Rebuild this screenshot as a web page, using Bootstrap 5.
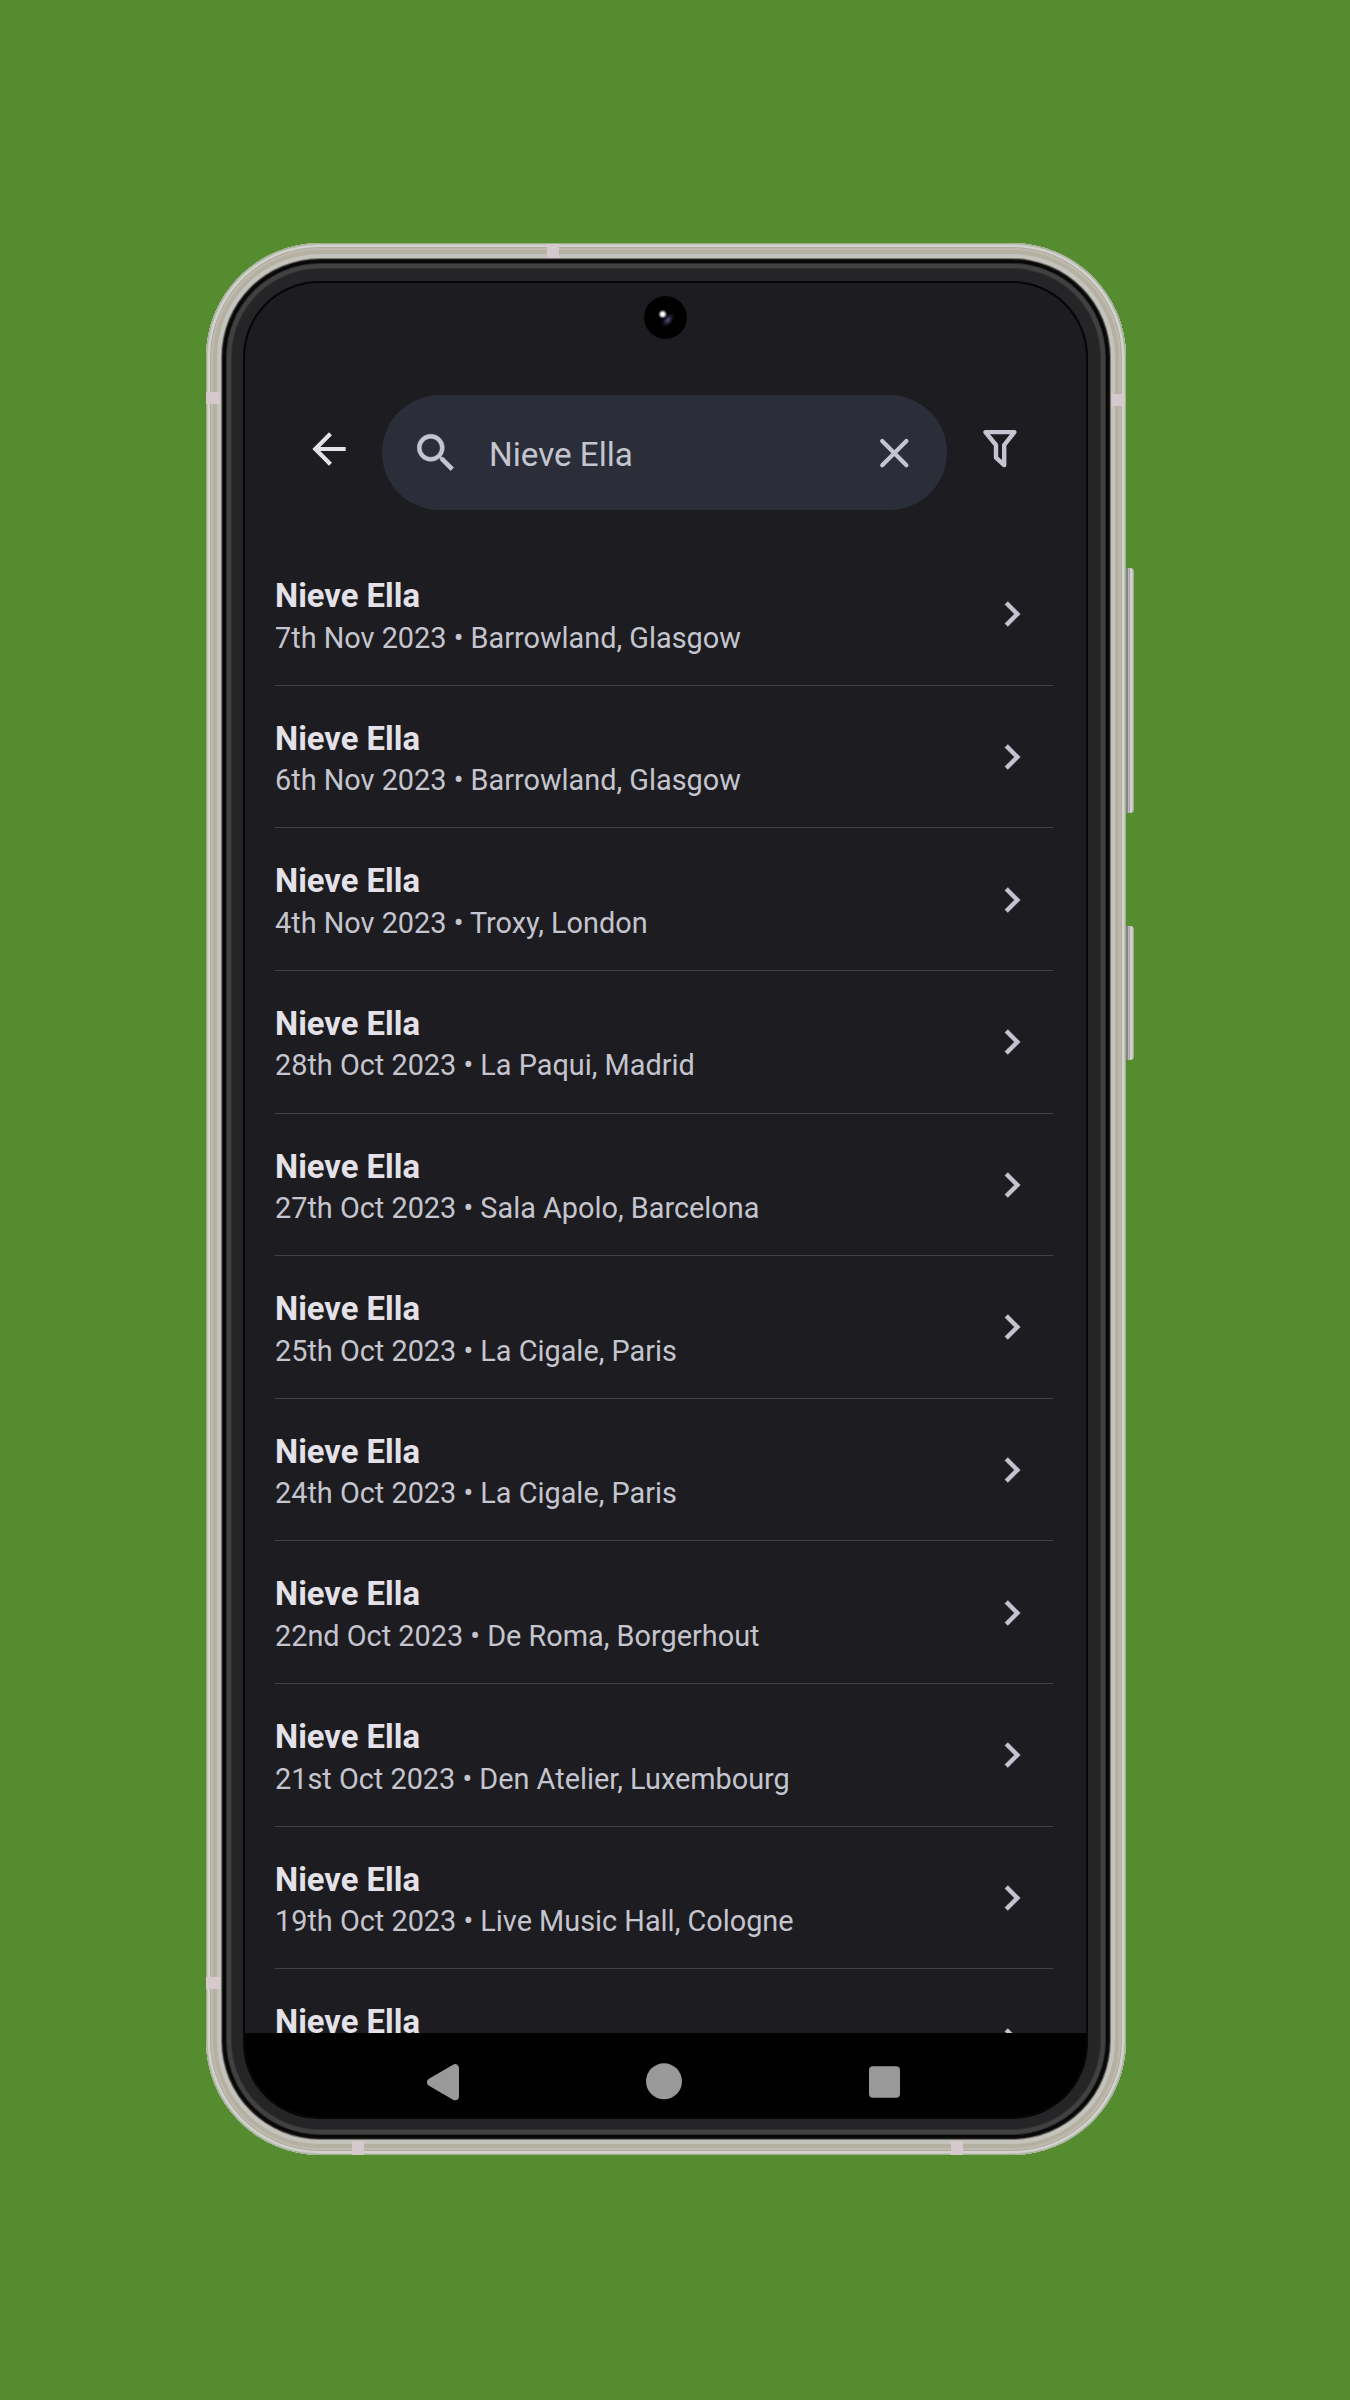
<!DOCTYPE html>
<html lang="en" data-bs-theme="dark">
<head>
<meta charset="utf-8">
<meta name="viewport" content="width=device-width, initial-scale=1">
<title>Gig search</title>
<link href="https://cdn.jsdelivr.net/npm/bootstrap@5.3.0/dist/css/bootstrap.min.css" rel="stylesheet">
<style>
body{background:#548c2f;font-family:Roboto,"Liberation Sans",sans-serif;min-height:2400px;padding:243px 0 0 206px;overflow-x:hidden}
.phone{width:920px;height:1912px;border-radius:114px;background:#252527;padding:40px 40px 38px 39px;
box-shadow:inset 0 0 0 1px #9db18c,inset 0 0 0 2px #c3c5be,inset 0 0 0 4px #d3d3cf,inset 0 0 0 5px #aeaba0,inset 0 0 0 7px #bfbaad,inset 0 0 0 11px #b5b1a2,inset 0 0 0 15px #c5c3bd,inset 0 0 0 16px #77756e,inset 0 0 0 17px #20201e,inset 0 0 0 20px #080808,inset 0 0 0 21px #2b2b2b,inset 0 0 0 25px #414141,inset 0 0 0 26px #303030}
.screen{height:1834px;border-radius:74px;background:#1d1c20;overflow:hidden;box-shadow:0 0 0 2px #060606}
/* antenna bands on the metal frame */
.band{background:#d5c9ce}
.band-side{width:14px;height:12px}
.band-edge{width:12px;height:14px}
.band-1{left:341px;top:1px}
.band-2{left:0;top:149px}
.band-3{left:905px;top:151px}
.band-4{left:0;top:1734px}
.band-5{left:146px;top:1898px}
.band-6{left:745px;top:1898px}
.side-key{left:920px;width:8px;border-radius:0 4px 4px 0;background:linear-gradient(90deg,#858585 0 1.5px,#bdbbb8 2px 3px,#a8a6a3 3.5px,#d2d1cf 4.5px 6px,#9b9b99 8px)}
.key-volume{top:325px;height:245px}
.key-power{top:683px;height:134px}
.camera{left:438px;top:53px}
.topbar{height:260px;padding:112px 0 0 59px}
.back-icon{margin-top:28.5px;color:#e4e2e8}
.search{width:565px;height:115px;margin-left:28px;padding:0 28px;background:#2b2e39;color:#c4c5d0;font-size:33.2px;line-height:40px}
.lens-icon{margin-left:.5px;stroke:currentColor;stroke-width:.2}
.query{margin:4px 0 0 28.5px}
.filter-icon{margin:31px 0 0 32px}
.tone{color:#c4c5d0}
.chevron{position:relative;margin-top:1px;stroke:currentColor;stroke-width:.2}
.rows{height:1490px;overflow:hidden;padding:0 33px 0 30px}
.row-item{height:142.63px;border-bottom:1px solid #424247;padding-right:16px}
.gig{font-size:32.8px;line-height:38px;font-weight:700;color:#e4e2e8;margin-top:4px}
.info{font-size:28.85px;line-height:34px;color:#c4c5ce;margin-top:5.4px}
.navkeys{height:84px;background:#000;padding:14px 186px 0 182px}
</style>
</head>
<body>
<main class="phone position-relative">
  <div class="side-key key-volume position-absolute"></div>
  <div class="side-key key-power position-absolute"></div>
  <i class="band band-edge band-1 position-absolute"></i>
  <i class="band band-side band-2 position-absolute"></i>
  <i class="band band-side band-3 position-absolute"></i>
  <i class="band band-side band-4 position-absolute"></i>
  <i class="band band-edge band-5 position-absolute"></i>
  <i class="band band-edge band-6 position-absolute"></i>

  <div class="screen d-flex flex-column">
    <header class="topbar d-flex align-items-start flex-shrink-0">
      <svg class="back-icon flex-shrink-0" width="50" height="50" viewBox="0 0 24 24" fill="currentColor"><path d="M20 11H7.83l5.59-5.59L12 4l-8 8 8 8 1.41-1.41L7.83 13H20z"/></svg>
      <div class="search rounded-pill d-flex align-items-center flex-shrink-0">
        <svg class="lens-icon flex-shrink-0" width="50" height="50" viewBox="0 0 24 24" fill="currentColor"><path d="M15.5 14h-.79l-.28-.27C15.41 12.59 16 11.11 16 9.5 16 5.91 13.09 3 9.5 3S3 5.91 3 9.5 5.91 16 9.5 16c1.61 0 3.09-.59 4.23-1.57l.27.28v.79l5 4.99L20.49 19l-4.99-5zm-6 0C7.01 14 5 11.99 5 9.5S7.01 5 9.5 5 14 7.01 14 9.5 11.99 14 9.5 14z"/></svg>
        <span class="query flex-grow-1">Nieve Ella</span>
        <svg class="flex-shrink-0" width="50" height="50" viewBox="0 0 50 50" fill="none" stroke="currentColor" stroke-width="4.2" stroke-linecap="round"><path d="M13.2 13 37.4 37.2M37.4 13 13.2 37.2"/></svg>
      </div>
      <svg class="filter-icon tone flex-shrink-0" width="42" height="46" viewBox="979 426 42 46" fill="none" stroke="currentColor" stroke-width="4.4" stroke-linejoin="round"><path d="M985.4 432.1H1014.4L1004.2 445V465L996 457.6V445Z"/></svg>
    </header>
    <section class="rows" id="rows"></section>
    <footer class="navkeys d-flex justify-content-between align-items-start flex-shrink-0">
      <svg width="32" height="70" viewBox="0 0 32 70"><path d="M4 35.2 28 21.2V49.2Z" fill="#999" stroke="#999" stroke-width="8" stroke-linejoin="round"/></svg>
      <svg width="37" height="70" viewBox="0 0 37 70"><circle cx="18" cy="34.3" r="18" fill="#999"/></svg>
      <svg width="31" height="70" viewBox="0 0 31 70"><rect y="19.3" width="31" height="31.4" rx="4" fill="#999"/></svg>
    </footer>
  </div>

  <svg class="camera position-absolute" width="43" height="43" viewBox="0 0 43 43">
    <defs>
      <radialGradient id="glint"><stop offset=".3" stop-color="#fff"/><stop offset="1" stop-color="#fff" stop-opacity="0"/></radialGradient>
      <radialGradient id="lens"><stop offset="0" stop-color="#5b558a"/><stop offset="1" stop-color="#2a2745" stop-opacity="0"/></radialGradient>
    </defs>
    <circle cx="21.5" cy="21.5" r="21.4" fill="#000"/>
    <ellipse cx="24" cy="24" rx="8.5" ry="5" fill="url(#lens)" transform="rotate(-50 24 24)"/>
    <circle cx="18.7" cy="18.2" r="4.6" fill="url(#glint)"/>
  </svg>
</main>
<script>
const gigs = [
  "7th Nov 2023 • Barrowland, Glasgow",
  "6th Nov 2023 • Barrowland, Glasgow",
  "4th Nov 2023 • Troxy, London",
  "28th Oct 2023 • La Paqui, Madrid",
  "27th Oct 2023 • Sala Apolo, Barcelona",
  "25th Oct 2023 • La Cigale, Paris",
  "24th Oct 2023 • La Cigale, Paris",
  "22nd Oct 2023 • De Roma, Borgerhout",
  "21st Oct 2023 • Den Atelier, Luxembourg",
  "19th Oct 2023 • Live Music Hall, Cologne",
  ""
];
document.getElementById("rows").innerHTML = gigs.map(g => `
  <div class="row-item d-flex align-items-center justify-content-between">
    <div><div class="gig">Nieve Ella</div><div class="info">${g || "&nbsp;"}</div></div>
    <svg class="chevron tone flex-shrink-0" width="50" height="50" viewBox="0 0 24 24" fill="currentColor"><path d="M8.59 16.59 13.17 12 8.59 7.41 10 6l6 6-6 6z"/></svg>
  </div>`).join("");
</script>
<script src="https://cdn.jsdelivr.net/npm/bootstrap@5.3.0/dist/js/bootstrap.bundle.min.js"></script>
</body>
</html>
